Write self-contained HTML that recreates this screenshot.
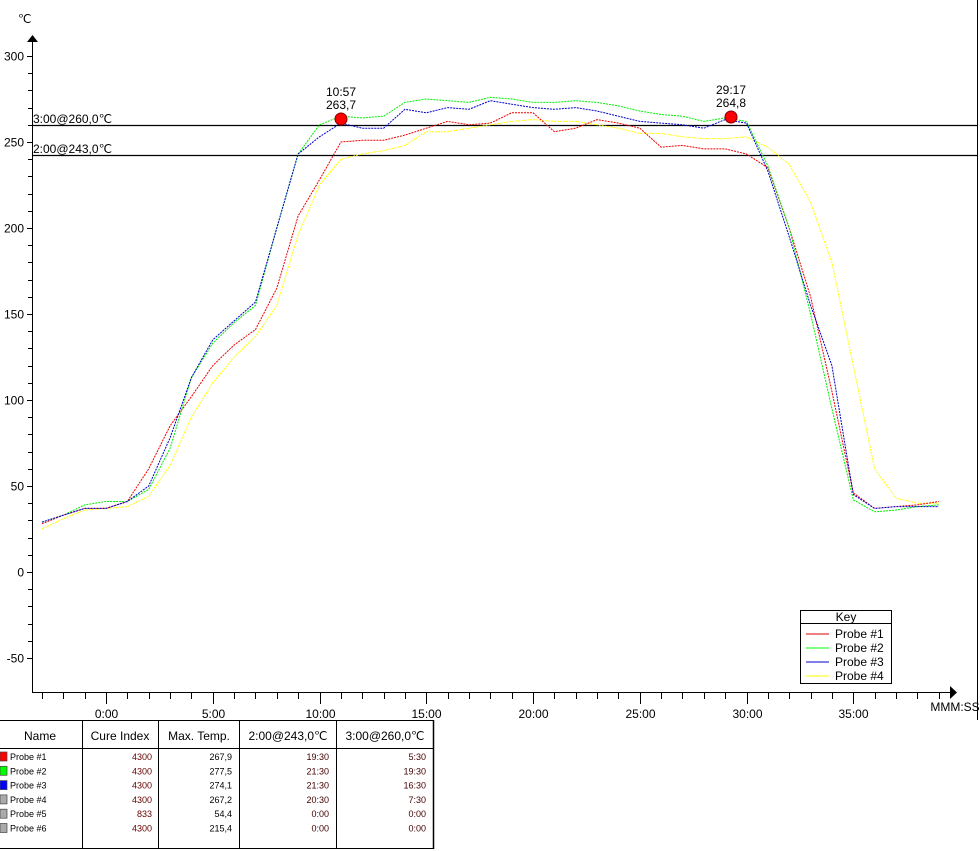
<!DOCTYPE html>
<html><head><meta charset="utf-8"><style>
body{margin:0;background:#fff;width:980px;height:851px;overflow:hidden;font-family:"Liberation Sans",Arial,sans-serif}
svg{position:absolute;left:0;top:0}
</style></head><body>
<svg id="s" width="980" height="851" xmlns="http://www.w3.org/2000/svg" font-family="Liberation Sans, Arial, sans-serif">
<line x1="977.5" y1="0" x2="977.5" y2="720" stroke="#000"/>
<text x="18" y="23" font-size="12">℃</text>
<line x1="32.5" y1="40" x2="32.5" y2="692" stroke="#000"/>
<polygon points="27,42 38,42 32.5,35" fill="#000"/>
<line x1="32" y1="692.5" x2="952" y2="692.5" stroke="#000"/>
<polygon points="950,686 950,699 957,692.5" fill="#000"/>
<text x="955" y="711" font-size="12" text-anchor="middle">MMM:SS</text>
<g id="yt"></g><g id="xt"></g>
<line x1="32" y1="125.5" x2="977" y2="125.5" stroke="#000" stroke-width="1.3"/>
<line x1="32" y1="155.5" x2="977" y2="155.5" stroke="#000" stroke-width="1.3"/>
<text x="33" y="123" font-size="12">3:00@260,0℃</text>
<text x="33" y="153" font-size="12">2:00@243,0℃</text>
<g id="curves" fill="none" stroke-width="1" stroke-dasharray="2,1"></g>
<circle cx="341" cy="119" r="6" fill="#f00" stroke="#800"/>
<circle cx="731" cy="117" r="6" fill="#f00" stroke="#800"/>
<text x="341" y="96" font-size="12" text-anchor="middle">10:57</text>
<text x="341" y="109" font-size="12" text-anchor="middle">263,7</text>
<text x="731" y="94" font-size="12" text-anchor="middle">29:17</text>
<text x="731" y="107" font-size="12" text-anchor="middle">264,8</text>
<rect x="800.5" y="610.5" width="91" height="73" fill="#fff" stroke="#000"/>
<line x1="800" y1="623.5" x2="891" y2="623.5" stroke="#000"/>
<text x="846" y="621" font-size="12" text-anchor="middle">Key</text>
<line x1="806" y1="634" x2="829" y2="634" stroke="#d00"/>
<line x1="806" y1="648" x2="829" y2="648" stroke="#0f0"/>
<line x1="806" y1="662" x2="829" y2="662" stroke="#00c"/>
<line x1="806" y1="676" x2="829" y2="676" stroke="#ff0"/>
<text x="835" y="638" font-size="12">Probe #1</text>
<text x="835" y="652" font-size="12">Probe #2</text>
<text x="835" y="666" font-size="12">Probe #3</text>
<text x="835" y="680" font-size="12">Probe #4</text>
<!-- table -->
<line x1="0" y1="720.5" x2="434" y2="720.5" stroke="#000"/>
<line x1="0" y1="748.5" x2="434" y2="748.5" stroke="#000"/>
<line x1="0" y1="848.5" x2="434" y2="848.5" stroke="#000"/>
<line x1="82.5" y1="720" x2="82.5" y2="849" stroke="#000"/>
<line x1="158.5" y1="720" x2="158.5" y2="849" stroke="#000"/>
<line x1="239.5" y1="720" x2="239.5" y2="849" stroke="#000"/>
<line x1="336.5" y1="720" x2="336.5" y2="849" stroke="#000"/>
<line x1="433.5" y1="720" x2="433.5" y2="849" stroke="#000" stroke-width="1.5"/>
<g font-size="12" text-anchor="middle">
<text x="40" y="740">Name</text><text x="120" y="740">Cure Index</text><text x="199" y="740">Max. Temp.</text><text x="288" y="740">2:00@243,0℃</text><text x="385" y="740">3:00@260,0℃</text>
</g>
<g id="rows" font-size="9"></g>
</svg>
<script>
var s='http://www.w3.org/2000/svg';
function el(p,t,a,tx){var e=document.createElementNS(s,t);for(var k in a)e.setAttribute(k,a[k]);if(tx!==undefined)e.textContent=tx;document.getElementById(p).appendChild(e);}
function Y(v){return 572-v*1.72}
function X(t){return 106+21.35*t}
for(var v=-50;v<=300;v+=10){var y=Math.round(Y(v))+.5;var maj=v%50==0;el('yt','line',{x1:maj?27:28,y1:y,x2:32,y2:y,stroke:'#000'});if(maj)el('yt','text',{x:24,y:y+4,'font-size':12,'text-anchor':'end'},v);}
for(var t=-3;t<=39;t++){var x=Math.round(X(t))+.5;var maj=t%5==0;el('xt','line',{x1:x,y1:692,x2:x,y2:maj?704:699,stroke:'#000'});if(maj)el('xt','text',{x:x,y:718,'font-size':12,'text-anchor':'middle'},Math.abs(t)+':00');}
var D={
'#ff0':[25,31,36,37,38,44,62,90,110,125,137,155,196,225,240,243,245,248,256,256,258,260,262,263,262,262,260,258,255,255,253,252,252,253,247,237,215,180,120,60,43,40,40],
'#e00':[28,33,37,37,41,60,85,102,120,132,141,165,207,228,250,251,251,254,258,262,260,261,267,267,256,258,263,261,258,247,248,246,246,243,235,200,160,105,46,37,38,39,41],
'#0e0':[29,33,39,41,41,48,72,113,133,145,155,200,243,260,265,264,265,273,275,274,273,276,275,273,273,274,273,271,268,266,265,262,264,262,236,200,150,95,42,35,36,38,39],
'#00c':[29,33,37,37,41,50,78,113,135,146,157,200,243,253,261,258,258,269,267,270,269,274,272,270,269,270,268,265,262,261,260,258,263,261,233,195,155,120,45,37,38,38,38]};
for(var c in D){var p=D[c].map(function(v,i){return X(i-3).toFixed(1)+','+Y(v).toFixed(1)}).join(' ');el('curves','polyline',{points:p,stroke:c});}
var R=[['#f00','Probe #1','4300','267,9','19:30','5:30'],['#0f0','Probe #2','4300','277,5','21:30','19:30'],['#00f','Probe #3','4300','274,1','21:30','16:30'],['#aaa','Probe #4','4300','267,2','20:30','7:30'],['#aaa','Probe #5','833','54,4','0:00','0:00'],['#aaa','Probe #6','4300','215,4','0:00','0:00']];
R.forEach(function(r,i){var y=760+i*14.3;el('rows','rect',{x:0,y:y-8,width:7,height:9,fill:r[0],stroke:'#444','stroke-width':.7});el('rows','text',{x:10,y:y},r[1]);
el('rows','text',{x:152,y:y,'text-anchor':'end',fill:'#600'},r[2]);el('rows','text',{x:232,y:y,'text-anchor':'end'},r[3]);el('rows','text',{x:329,y:y,'text-anchor':'end',fill:'#400'},r[4]);el('rows','text',{x:426,y:y,'text-anchor':'end',fill:'#400'},r[5]);});
</script>
</body></html>
